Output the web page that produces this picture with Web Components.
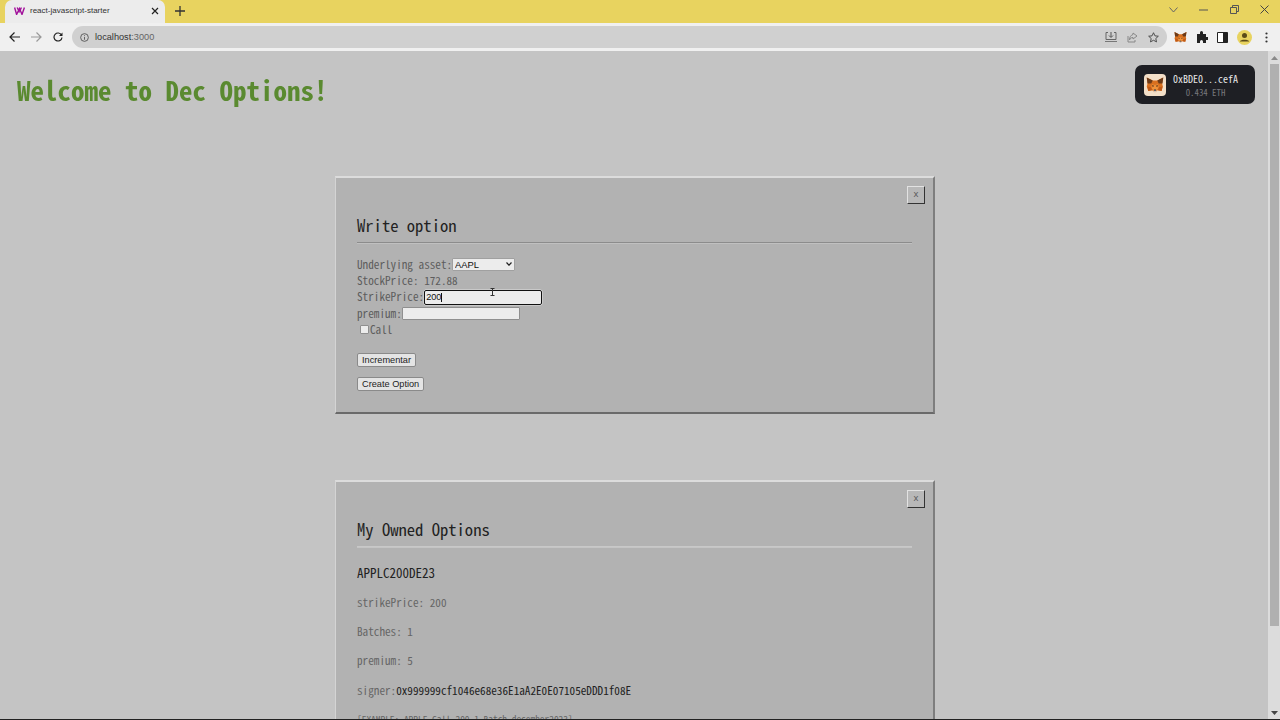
<!DOCTYPE html>
<html><head><meta charset="utf-8">
<style>
html,body{margin:0;padding:0;height:100%;overflow:hidden}
body{display:flex;flex-direction:column;width:1280px;height:720px;font-family:"Noto Sans CJK JP","Liberation Mono",monospace;background:#c4c4c4}
</style></head><body>
<browser-tabs></browser-tabs>
<browser-toolbar></browser-toolbar>
<page-view>
  <page-header title-text="Welcome to Dec Options!"></page-header>
  <modal-card style="margin-top:72px;--hr1:#8c8c8c;--hr2:#c0c0c0">
    <span slot="title">Write option</span>
    <write-form></write-form>
  </modal-card>
  <modal-card style="margin-top:66px;--hr1:#c8c8c8;--hr2:#c4c4c4">
    <span slot="title">My Owned Options</span>
    <option-details></option-details>
  </modal-card>
</page-view>
<script>
const mono=`font-family:"Noto Sans CJK JP","Liberation Mono",monospace;font-feature-settings:"hwid";`;
function def(name,html,init){customElements.define(name,class extends HTMLElement{constructor(){super();this.attachShadow({mode:'open'}).innerHTML=html;if(init)init(this)}})}
const fox=(s)=>`<svg width="${s}" height="${s}" viewBox="0 0 24 24"><path fill="#d9701f" d="M1 2l8 4h6l8-4-1.500 8 1 4-2 6-5-1-2 1.500h-3L8 19l-5 1-2-6 1-4z"/><path fill="#f0923a" d="M8 11l4 1 4-1 1 5-3 3h-4l-3-3z"/><path fill="#6b3a18" d="M1 2l8 4-2 4-5 0zM23 2l-8 4 2 4 5 0zM8 12l3 1-2 2zM16 12l-3 1 2 2z"/><path fill="#d7c1b3" d="M10 19h4l-.5 2.500h-3z"/><path fill="#233447" d="M10.500 18h3l-.5 1.500h-2z"/><path fill="#c05a16" d="M3 20l5-1-1-4-5-1zM21 20l-5-1 1-4 5-1z"/></svg>`;
def('browser-tabs',`<style>
:host{display:flex;align-items:flex-end;height:23px;background:#e8d35f;padding-left:5px;flex:none;${mono}}
.tab{width:160px;height:23px;background:#ececec;border-radius:7px 7px 0 0;display:flex;align-items:center;box-sizing:border-box;padding:0 6px 2px 9px;gap:5px;font:8px "Liberation Sans",sans-serif;color:#333}
.tab span{flex:1}
.plus{margin:0 0 0 10px;width:12px;height:23px;padding-bottom:2px;box-sizing:border-box;display:flex;align-items:center}
.win{margin-left:auto;display:flex;height:23px;padding-bottom:4px;box-sizing:border-box;align-items:center}
.win svg{display:block}
.w{width:30.500px;display:flex;justify-content:center}
</style>
<div class="tab"><svg width="11" height="8" viewBox="0 0 11 8"><path d="M.6 .5L2.600 7.500 5.500 1.500 8 7.500 10.400 .5M3.200 .5L5.500 5.500M7.400 .5L5.800 4" fill="none" stroke="#a2119b" stroke-width="1.400"/></svg><span>react-javascript-starter</span><svg width="8" height="8" viewBox="0 0 8 8"><path d="M1 1l6 6M7 1L1 7" stroke="#222" stroke-width="1.200"/></svg></div>
<div class="plus"><svg width="10" height="10" viewBox="0 0 10 10"><path d="M5 0v10M0 5h10" stroke="#333" stroke-width="1.300"/></svg></div>
<div class="win">
<div class="w"><svg width="9" height="6" viewBox="0 0 9 6"><path d="M.5 .5L4.500 5 8.500 .5" fill="none" stroke="#666"/></svg></div>
<div class="w"><svg width="9" height="2" viewBox="0 0 9 2"><path d="M0 1h9" stroke="#555"/></svg></div>
<div class="w"><svg width="9" height="9" viewBox="0 0 9 9"><path d="M.5 2.500h6v6h-6zM2.500 2.500v-2h6v6h-2" fill="none" stroke="#555"/></svg></div>
<div class="w"><svg width="9" height="9" viewBox="0 0 9 9"><path d="M.5 .5l8 8M8.500 .5l-8 8" stroke="#444"/></svg></div>
</div>`);
def('browser-toolbar',`<style>
:host{display:flex;align-items:center;height:28px;box-sizing:border-box;padding:1px 0;background:#f0f0f0;flex:none}
.nav{display:flex;gap:0;padding-left:4px;width:72px;box-sizing:border-box}
.nav div{width:21.500px;display:flex;justify-content:center}
.omni{width:1095px;height:22px;background:#d0d0d0;border-radius:11px;display:flex;align-items:center;padding:0 8px;box-sizing:border-box;font:9.200px "Liberation Sans",sans-serif;color:#666;gap:6px}
.omni .u{flex:1}
.omni .u b{font-weight:400;color:#333}
.ic{display:flex;gap:10px;align-items:center}
.ext{display:flex;align-items:center;margin-left:7px}
</style>
<div class="nav">
<div><svg width="11" height="10" viewBox="0 0 11 10"><path d="M5.500 .5L1 5l4.500 4.500M1 5h10" fill="none" stroke="#222" stroke-width="1.200"/></svg></div>
<div><svg width="11" height="10" viewBox="0 0 11 10"><path d="M5.500 .5L10 5 5.500 9.500M10 5H0" fill="none" stroke="#999" stroke-width="1.200"/></svg></div>
<div><svg width="10" height="10" viewBox="0 0 10 10"><path d="M8.500 3A4 4 0 1 0 9 5.500" fill="none" stroke="#222" stroke-width="1.200"/><path d="M9.500 .5v3.500H6z" fill="#222"/></svg></div>
</div>
<div class="omni">
<svg width="9" height="9" viewBox="0 0 10 10"><circle cx="5" cy="5" r="4.300" fill="none" stroke="#555"/><path d="M5 4.500v3M5 2.500v1" stroke="#555"/></svg>
<span class="u"><b>localhost</b>:3000</span>
<div class="ic">
<svg width="12" height="11" viewBox="0 0 12 11"><path d="M3 .5H1v7h10v-7H9" fill="none" stroke="#666"/><path d="M6 0v5M4 3.500L6 5.500 8 3.500" fill="none" stroke="#555"/><path d="M0 9.500h12" stroke="#777"/></svg>
<svg width="11" height="11" viewBox="0 0 11 11"><path d="M1 4v6h7V8" fill="none" stroke="#888"/><path d="M6 1l4 3-4 3V5.500C4 5.500 3 6.500 2.500 8 2.500 5 4 3 6 2.500z" fill="none" stroke="#888"/></svg>
<svg width="11" height="11" viewBox="0 0 12 12"><path d="M6 .8l1.600 3.400 3.700.4-2.800 2.500.8 3.700L6 9l-3.300 1.800.8-3.700L.7 4.600l3.700-.4z" fill="none" stroke="#444"/></svg>
</div></div>
<div class="ext">
${fox(13)}
<svg style="margin-left:9px" width="12" height="12" viewBox="0 0 12 12"><path d="M1 3h3V1.500a1.500 1.500 0 0 1 3 0V3h3v3h1.300a1.500 1.500 0 0 1 0 3H10v3H7V10.500a1.500 1.500 0 0 0-3 0V12H1z" fill="#222"/></svg>
<svg style="margin-left:9px" width="11" height="11" viewBox="0 0 11 11"><path d="M.5 .5h10v10H.5z" fill="#fff" stroke="#222"/><path d="M6 .5h4.500v10H6z" fill="#222"/></svg>
<svg style="margin-left:9px" width="15" height="15" viewBox="0 0 15 15"><circle cx="7.500" cy="7.500" r="7.500" fill="#e8d35f"/><circle cx="7.500" cy="5.500" r="2.500" fill="#5a4a18"/><path d="M2.800 11.500c.5-2.500 9-2.500 9.400 0z" fill="#5a4a18"/></svg>
<svg style="margin-left:13px" width="3" height="11" viewBox="0 0 3 11"><circle cx="1.500" cy="1.500" r="1.100" fill="#333"/><circle cx="1.500" cy="5.500" r="1.100" fill="#333"/><circle cx="1.500" cy="9.500" r="1.100" fill="#333"/></svg>
</div>`);
def('page-view',`<style>
:host{display:flex;flex:1;min-height:0;background:#c4c4c4;overflow:hidden;border-bottom:1px solid #222}
.main{flex:1;min-width:0;overflow:hidden}
.bar{width:12px;background:#dcdcdc;display:flex;flex-direction:column;align-items:center;flex:none}
.a{height:13px;display:flex;align-items:center;justify-content:center;flex:none}
.t{width:9px;height:562px;background:#b0b0b0;margin-left:1px;flex:none}
.s{flex:1}
</style>
<div class="main"><slot></slot></div>
<div class="bar"><div class="a"><svg width="7" height="4" viewBox="0 0 7 4"><path d="M3.500 0L7 4H0z" fill="#8a8a8a"/></svg></div><div class="t"></div><div class="s"></div><div class="a"><svg width="7" height="4" viewBox="0 0 7 4"><path d="M3.500 4L7 0H0z" fill="#444"/></svg></div></div>`);
def('page-header',`<style>
:host{display:flex;justify-content:space-between;align-items:flex-start;padding:14px 13px 0 17px;height:39px;${mono}}
h1{margin:9px 0 0;font-size:27px;line-height:32px;font-weight:700;color:#5a8a30;font-feature-settings:"hwid";filter:blur(.35px)}
</style><h1></h1><wallet-badge></wallet-badge>`,el=>{queueMicrotask(()=>el.shadowRoot.querySelector('h1').textContent=el.getAttribute('title-text'))});
def('wallet-badge',`<style>
:host{display:flex;align-items:center;width:120px;height:39px;box-sizing:border-box;background:#1e1f24;border-radius:7px;padding-left:9px;gap:6px;${mono}}
.i{width:22px;height:22px;border-radius:4px;background:#f3dfc8;display:flex;align-items:center;justify-content:center}
.t{display:flex;flex-direction:column;align-items:center;width:67px;gap:2px;padding-top:1px}
.a{font-size:10px;line-height:12px;color:#e6e6e6}
.b{font-size:8.800px;line-height:11px;color:#77787c}
</style><div class="i">${fox(18)}</div><div class="t"><div class="a">0xBDE0...cefA</div><div class="b">0.434 ETH</div></div>`);
def('modal-card',`<style>
:host{display:block;box-sizing:border-box;width:600px;margin-left:335px;background:#b2b2b2;border-style:solid;border-width:2px 2px 2px 1px;border-color:#dcdcdc #7e7e7e #6a6a6a #d4d4d4;padding:7px 21px 0 21px;${mono}}
.x{display:flex;justify-content:flex-end;margin:1px -13px 0 0}
button{width:18px;height:18px;padding:0;box-sizing:border-box;background:#b8b8b8;border:1px solid;border-color:#e2e2e2 #333 #333 #e2e2e2;font:9px "Liberation Mono",monospace;color:#555}
h2{margin:11px 0 0;font-size:16.600px;line-height:20px;font-weight:400;color:#222;font-feature-settings:"hwid"}
hr{margin:7px 0 0;border:0;border-top:1px solid var(--hr1);border-bottom:1px solid var(--hr2)}
</style><div class="x"><button>x</button></div><h2><slot name="title"></slot></h2><hr><slot></slot>`);
def('write-form',`<style>
:host{display:block;padding:12px 0 21px;font-size:11.200px;color:#5d5d5d;font-feature-settings:"hwid"}
.r{display:flex;align-items:center;height:16.200px;white-space:nowrap}
select{appearance:none;width:63px;height:13px;font:9.400px "Liberation Sans",sans-serif;background:#ececec;border:1px solid #a0a0a0;border-radius:1px;padding:0 0 0 2px;margin:0;color:#111;box-sizing:border-box}
input[type=text]{box-sizing:border-box;height:13px;width:118px;background:#ececec;border:1px solid #8f8f8f;border-radius:1px;margin:2px 0 0;padding:0 1px;font:9.200px "Liberation Sans",sans-serif;color:#111}
input.f{border:1.500px solid #111;border-radius:2px;height:15px;outline:0;width:118px;box-shadow:0 0 0 .5px #e0e0e0}
input[type=checkbox]{width:9px;height:9px;margin:2px 1px 0 3px;appearance:none;background:#ececec;border:1px solid #8f8f8f;border-radius:1px;box-sizing:border-box}
.b{margin-top:16px;display:flex;height:14px}
.b+.b{margin-top:10px}
button{height:14px;box-sizing:border-box;padding:0 4px;background:#e4e4e4;border:1px solid #8a8a8a;border-radius:2px;font:9.200px "Liberation Sans",sans-serif;color:#222}
.w{position:relative;display:inline-flex}
.cur{position:absolute;left:66px;top:0;width:5px;height:8px}
.caret{position:absolute;left:17px;top:5px;height:9px;width:1px;background:#111}
.arrow{position:absolute;right:3px;top:4px;width:6px;height:4px}
</style>
<div class="r">Underlying asset:<span class="w"><select><option>AAPL</option></select><svg class="arrow" viewBox="0 0 6 4"><path d="M.5 .5L3 3.200 5.500 .5" fill="none" stroke="#222" stroke-width="1.200"/></svg></span></div>
<div class="r">StockPrice: 172.88</div>
<div class="r">StrikePrice:<span class="w"><input class="f" type="text" value="200"><i class="caret"></i><svg class="cur" viewBox="0 0 5 8"><path d="M.5 .5h4M2.500 .5v7M.5 7.500h4" stroke="#333" fill="none"/></svg></span></div>
<div class="r">premium:<input type="text"></div>
<div class="r"><input type="checkbox">Call</div>
<div class="b"><button>Incrementar</button></div>
<div class="b"><button>Create Option</button></div>`);
def('option-details',`<style>
:host{display:block;padding-top:15px;font-size:11.200px;color:#666;font-feature-settings:"hwid"}
h3{margin:0;font-size:13px;line-height:20px;font-weight:400;color:#222}
p{margin:0;height:29.400px;line-height:16px;display:flex;align-items:center}
p:first-of-type{margin-top:4px}
.d{color:#222}
.e{font-size:9.400px;height:auto;margin-top:6px;color:#666;white-space:nowrap}
</style>
<h3>APPLC200DE23</h3>
<p>strikePrice: 200</p><p>Batches: 1</p><p>premium: 5</p><p>signer:<span class="d">0x999999cf1046e68e36E1aA2E0E07105eDDD1f08E</span></p>
<p class="e">[EXAMPLE: APPLE Call 200 1 Batch december2023]</p>`);
</script>
</body></html>
